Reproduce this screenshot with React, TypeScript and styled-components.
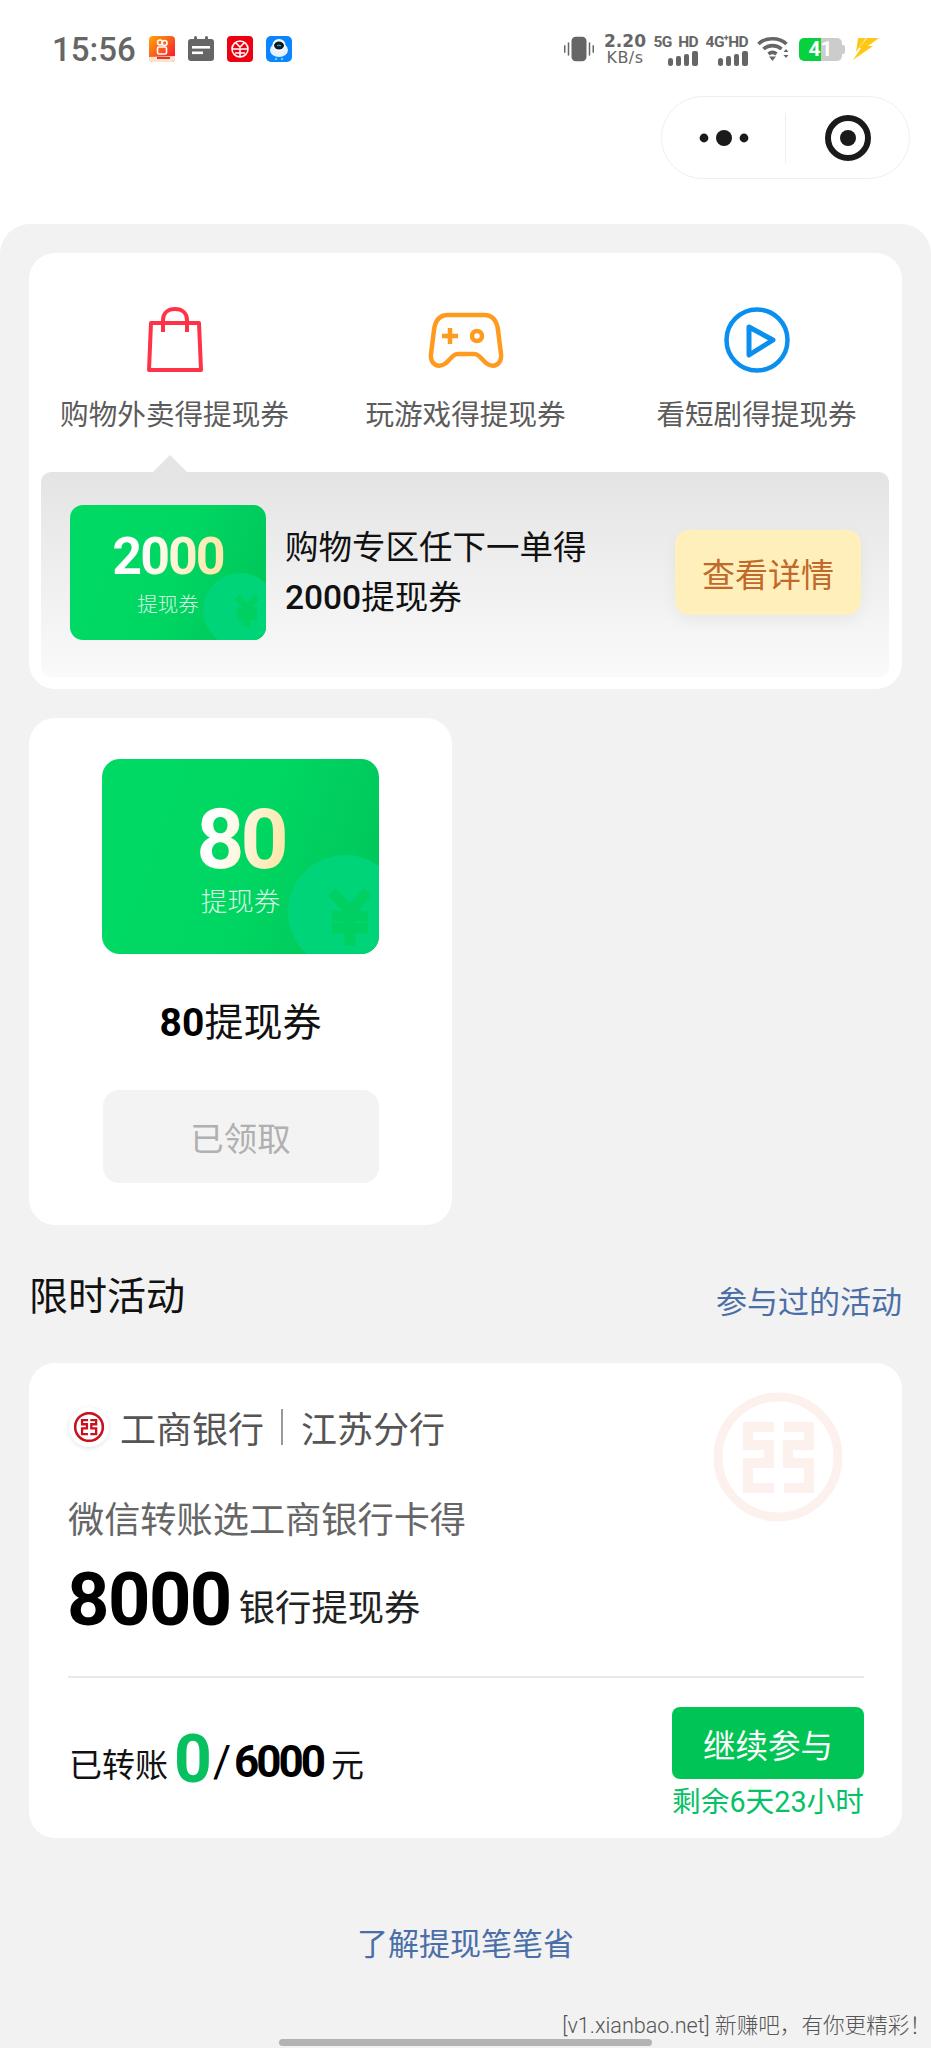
import styled, { createGlobalStyle } from 'styled-components'
import { JapaneseYen } from 'lucide-react'

const GlobalStyle = createGlobalStyle`
  html, body {
    margin: 0;
    padding: 0;
    background: #fff;
    font-family: Roboto, "Noto Sans CJK SC", sans-serif;
  }
`

const Page = styled.div`
  position: relative;
  display: flex;
  flex-direction: column;
  width: 931px;
  height: 2048px;
  overflow: hidden;
  background: #fff;
`

const StatusBar = styled.div`
  display: flex;
  align-items: center;
  height: 50px;
  margin-top: 24px;
  padding: 0 52px;
`

const Time = styled.div`
  font-size: 33px;
  font-weight: 500;
  color: #666;
  margin-right: 13px;
`

const AppIcons = styled.div`
  display: flex;
  gap: 13px;
`

const StatusRight = styled.div`
  display: flex;
  align-items: center;
  margin-left: auto;
`

const Speed = styled.div`
  display: flex;
  flex-direction: column;
  align-items: center;
  width: 40px;
  margin: 0 11px;
  font-family: "DejaVu Sans", sans-serif;
  color: #666;
  font-size: 17px;
  line-height: 17px;
  font-weight: 700;
  & > span:last-child {
    font-size: 16px;
    line-height: 16px;
    font-weight: 400;
    letter-spacing: 0.4px;
  }
`

const Network = styled.div<{ $gap: number }>`
  display: flex;
  flex-direction: column;
  align-items: flex-end;
  width: 42px;
  margin-right: ${(p) => p.$gap}px;
  font-size: 15.500px;
  line-height: 18px;
  font-weight: 700;
  letter-spacing: -0.6px;
  color: #666;
  white-space: nowrap;
  & sup {
    font-size: 9px;
    line-height: 0;
  }
`

const Battery = styled.div`
  position: relative;
  display: flex;
  align-items: center;
  justify-content: center;
  width: 43px;
  height: 23px;
  margin: 0 11px 0 9px;
  border-radius: 5px;
  background: linear-gradient(90deg, #07d13f 0 52%, #ccc 52% 100%);
  font-size: 21px;
  font-weight: 700;
  color: #fff;
  &::after {
    content: '';
    position: absolute;
    right: -3px;
    top: 7px;
    width: 3px;
    height: 9px;
    border-radius: 0 2px 2px 0;
    background: #ccc;
  }
`

const CapsuleRow = styled.div`
  display: flex;
  justify-content: flex-end;
  margin-top: 22px;
  padding-right: 21px;
`

const Capsule = styled.div`
  display: flex;
  align-items: center;
  box-sizing: border-box;
  width: 249px;
  height: 83px;
  border: 1.5px solid #efefef;
  border-radius: 42px;
`

const CapsuleSide = styled.div`
  flex: 1;
  display: flex;
  justify-content: center;
  align-items: center;
  height: 50px;
  & + & {
    border-left: 1.5px solid #eee;
  }
`

const Sheet = styled.div`
  flex: 1;
  margin-top: 45px;
  padding: 29px 29px 0;
  background: #f2f2f2;
  border-radius: 30px 30px 0 0;
`

const Card = styled.div`
  background: #fff;
  border-radius: 26px;
`

const TabsCard = styled(Card)`
  height: 436px;
  display: flex;
  flex-direction: column;
`

const Tabs = styled.div`
  display: grid;
  grid-template-columns: repeat(3, 1fr);
  height: 219px;
`

const Tab = styled.div`
  display: flex;
  flex-direction: column;
  align-items: center;
  padding-top: 54px;
`

const TabIcon = styled.div`
  display: flex;
  align-items: center;
  justify-content: center;
  height: 65px;
`

const TabLabel = styled.div`
  margin-top: 23px;
  font-size: 28.600px;
  line-height: 40px;
  color: #5c5c5c;
  white-space: nowrap;
`

const Panel = styled.div`
  position: relative;
  display: flex;
  align-items: center;
  height: 205px;
  margin: 0 13px 0 12px;
  padding: 0 28px 4px 29px;
  border-radius: 10px;
  box-sizing: border-box;
  background: linear-gradient(180deg, #e4e4e4, #fafafa);
  &::before {
    content: '';
    position: absolute;
    left: 111px;
    top: -17px;
    width: 36px;
    height: 18px;
    background: #e5e5e5;
    clip-path: polygon(50% 0, 100% 100%, 0 100%);
  }
`

const Coupon = styled.div<{ $big?: boolean }>`
  position: relative;
  flex: none;
  box-sizing: border-box;
  display: flex;
  flex-direction: column;
  align-items: center;
  overflow: hidden;
  width: ${(p) => (p.$big ? '277px' : '196px')};
  height: ${(p) => (p.$big ? '195px' : '135px')};
  margin: ${(p) => (p.$big ? '0 auto' : '0')};
  padding-top: ${(p) => (p.$big ? '36px' : '24px')};
  border-radius: ${(p) => (p.$big ? '18px' : '13px')};
  background: linear-gradient(110deg, #00da65 0%, #00d762 50%, #00c45a 100%);
`

const CouponCoin = styled.div<{ $big?: boolean }>`
  position: absolute;
  border-radius: 50%;
  background: #00d478;
  width: ${(p) => (p.$big ? '114px' : '74px')};
  height: ${(p) => (p.$big ? '114px' : '74px')};
  right: ${(p) => (p.$big ? '-23px' : '-11px')};
  bottom: ${(p) => (p.$big ? '-15px' : '-7px')};
`

const CouponYen = styled(JapaneseYen)<{ $big?: boolean }>`
  position: absolute;
  color: #00cf62;
  right: ${(p) => (p.$big ? '-7px' : '-1px')};
  bottom: ${(p) => (p.$big ? '-1px' : '8px')};
`

const CouponValue = styled.div<{ $big?: boolean }>`
  position: relative;
  font-weight: 700;
  font-size: ${(p) => (p.$big ? '84px' : '52px')};
  line-height: ${(p) => (p.$big ? '90px' : '56px')};
  letter-spacing: ${(p) => (p.$big ? '-4px' : '-2px')};
  background: linear-gradient(100deg, #fff 25%, #fbe8ac 90%);
  -webkit-background-clip: text;
  background-clip: text;
  color: transparent;
`

const CouponLabel = styled.div<{ $big?: boolean }>`
  position: relative;
  color: rgba(255, 255, 255, 0.85);
  font-size: ${(p) => (p.$big ? '26.500px' : '20.500px')};
  line-height: ${(p) => (p.$big ? '34px' : '26px')};
  margin-top: ${(p) => (p.$big ? '0' : '7px')};
  font-weight: 300;
`

const PanelText = styled.div`
  flex: 1;
  margin-left: 19px;
  font-size: 33.500px;
  line-height: 50px;
  color: #111;
`

const PanelNumber = styled.span`
  font-weight: 500;
`

const DetailButton = styled.div`
  flex: none;
  display: flex;
  align-items: center;
  justify-content: center;
  width: 186px;
  height: 85px;
  border-radius: 14px;
  background: #fff0bb;
  box-shadow: 0 6px 16px rgba(0, 0, 0, 0.05);
  color: #c0692a;
  font-size: 33px;
`

const RewardCard = styled(Card)`
  box-sizing: border-box;
  width: 423px;
  height: 507px;
  margin-top: 29px;
  padding-top: 41px;
`

const RewardTitle = styled.div`
  margin-top: 44px;
  text-align: center;
  font-size: 39px;
  line-height: 50px;
  color: #111;
  & b {
    color: #000;
  }
`

const ClaimedButton = styled.div`
  display: flex;
  align-items: center;
  justify-content: center;
  width: 276px;
  height: 93px;
  margin: 42px auto 0;
  border-radius: 16px;
  background: #f3f3f3;
  color: #b0b0b0;
  font-size: 33.500px;
`

const SectionHeader = styled.div`
  display: flex;
  justify-content: space-between;
  margin: 46px 0 34px;
`

const SectionTitle = styled.div`
  font-size: 39px;
  line-height: 52px;
  color: #111;
`

const SectionLink = styled.div`
  margin-top: 6px;
  font-size: 31px;
  line-height: 52px;
  color: #4a6ea8;
`

const ActivityCard = styled(Card)`
  position: relative;
  box-sizing: border-box;
  height: 475px;
  padding: 39px 38px 0 39px;
`

const Watermark = styled.div`
  position: absolute;
  right: 59px;
  top: 29px;
`

const BankRow = styled.div`
  position: relative;
  display: flex;
  align-items: center;
  height: 50px;
  font-size: 36px;
  color: #555;
`

const BankLogo = styled.div`
  display: flex;
  align-items: center;
  justify-content: center;
  width: 40px;
  height: 40px;
  margin: 0 11px 0 1px;
  border-radius: 50%;
  background: #fff;
  box-shadow: 0 1px 4px rgba(0, 0, 0, 0.12);
`

const BankDivider = styled.div`
  width: 2px;
  height: 36px;
  margin: 0 18px 0 17px;
  background: #999;
`

const Desc = styled.div`
  position: relative;
  margin-top: 44px;
  font-size: 36.200px;
  line-height: 50px;
  color: #666;
`

const AmountRow = styled.div`
  position: relative;
  display: flex;
  align-items: baseline;
  gap: 8px;
  margin: 14px 0 0 -1px;
  height: 80px;
`

const AmountValue = styled.span`
  font-size: 74px;
  line-height: 80px;
  font-weight: 700;
  letter-spacing: -1.500px;
  color: #000;
`

const AmountUnit = styled.span`
  font-size: 36.300px;
  color: #222;
  position: relative;
  top: -4px;
`

const Rule = styled.div`
  height: 2px;
  margin-top: 36px;
  background: #e9e9e9;
`

const Footer = styled.div`
  display: flex;
  justify-content: space-between;
  margin-top: 29px;
`

const Progress = styled.div`
  display: flex;
  align-items: baseline;
  height: 80px;
  margin: 8px 0 0 1px;
  font-size: 33px;
  line-height: 80px;
  color: #111;
`

const ProgressNow = styled.span`
  position: relative;
  top: 5px;
  margin: 0 3px 0 6px;
  font-size: 66px;
  font-weight: 700;
  letter-spacing: -2px;
  color: #07c160;
`

const ProgressTotal = styled.span`
  margin-right: 8px;
  font-size: 44px;
  font-weight: 700;
  letter-spacing: -3px;
  color: #000;
`

const Slash = styled.span`
  margin-right: 3px;
  font-size: 44px;
  font-weight: 400;
  color: #000;
`

const FooterAction = styled.div`
  display: flex;
  flex-direction: column;
  align-items: center;
  width: 192px;
`

const ContinueButton = styled.div`
  display: flex;
  align-items: center;
  justify-content: center;
  width: 100%;
  height: 72px;
  border-radius: 8px;
  background: #00c555;
  color: #fff;
  font-size: 32.500px;
`

const Remaining = styled.div`
  margin-top: 3px;
  font-size: 28.700px;
  line-height: 40px;
  color: #06c167;
  white-space: nowrap;
`

const LearnMore = styled.div`
  margin-top: 82px;
  text-align: center;
  font-size: 31px;
  line-height: 50px;
  color: #4a6ea8;
`

const SiteNote = styled.div`
  position: absolute;
  right: 0;
  bottom: 7px;
  font-size: 21.600px;
  line-height: 30px;
  color: #555;
  font-weight: 300;
  white-space: nowrap;
`

const HomeBar = styled.div`
  position: absolute;
  left: 279px;
  bottom: 2px;
  width: 373px;
  height: 7px;
  border-radius: 4px;
  background: #b3b3b3;
`

function Signal() {
  return (
    <svg width="30" height="15" viewBox="0 0 30 15" fill="#666">
      <rect x="0" y="7" width="5" height="8" rx="2.500" />
      <rect x="8" y="5" width="5" height="10" rx="2" />
      <rect x="16" y="3" width="5" height="12" rx="2" />
      <rect x="24" y="0" width="6" height="15" rx="2" />
    </svg>
  )
}

function IcbcMark({ size, color, ring }: { size: number; color: string; ring: number }) {
  return (
    <svg width={size} height={size} viewBox="0 0 130 130" fill="none" stroke={color} style={{ display: 'block' }}>
      <circle cx="65" cy="65" r="60" strokeWidth={ring} />
      <path d="M61 35 H35 V53 H56 V71 H35 V96 H61 M71 35 H96 V53 H75 V71 H96 V96 H71" strokeWidth="10" />
    </svg>
  )
}

function App() {
  return (
    <Page>
      <GlobalStyle />
      <StatusBar>
        <Time>15:56</Time>
        <AppIcons>
          <svg width="26" height="26" viewBox="0 0 26 26">
            <defs>
              <linearGradient id="ks" x1="0" y1="0" x2="1" y2="1">
                <stop offset="0" stopColor="#ffa800" />
                <stop offset="1" stopColor="#f50a3c" />
              </linearGradient>
            </defs>
            <rect width="26" height="26" rx="4" fill="url(#ks)" />
            <g fill="none" stroke="#fff" strokeWidth="1.600">
              <circle cx="11" cy="6.500" r="2.500" />
              <circle cx="15.500" cy="7" r="2.500" />
              <rect x="8.500" y="11" width="9" height="7" rx="1.500" />
            </g>
            <path d="M0 21 L26 20 V23 Q26 26 22 26 H4 Q0 26 0 23 Z" fill="#ffe3cc" />
            <path d="M8 22 H21" stroke="#e5352b" strokeWidth="2" />
          </svg>
          <svg width="26" height="26" viewBox="0 0 26 26">
            <rect x="0" y="3" width="26" height="22" rx="3" fill="#666" />
            <rect x="6" y="0" width="3" height="6" rx="1.500" fill="#666" />
            <rect x="17" y="0" width="3" height="6" rx="1.500" fill="#666" />
            <rect x="4" y="10" width="18" height="2.600" fill="#fff" />
            <rect x="4" y="15.500" width="11" height="2.600" fill="#fff" />
          </svg>
          <svg width="26" height="26" viewBox="0 0 26 26">
            <rect width="26" height="26" rx="4" fill="#ee0011" />
            <g fill="none" stroke="#fff" strokeWidth="1.600">
              <circle cx="13" cy="13" r="8" />
              <path d="M5 13 H21 M13 13 V21 M9 7 L13 11 L17 7 M8 17 H18" />
            </g>
          </svg>
          <svg width="26" height="26" viewBox="0 0 26 26">
            <rect width="26" height="26" rx="5" fill="#0a84ff" />
            <ellipse cx="13" cy="14" rx="9" ry="7" fill="#e8f2fb" />
            <ellipse cx="13" cy="9" rx="6.500" ry="6" fill="#fff" />
            <ellipse cx="13" cy="9.500" rx="5" ry="4" fill="#0c1a22" />
            <path d="M11 10 Q13 8 15 10" fill="none" stroke="#35d7c8" strokeWidth="1" />
            <circle cx="10" cy="23" r="1.200" fill="#53d7f0" />
            <circle cx="16" cy="23" r="1.200" fill="#53d7f0" />
          </svg>
        </AppIcons>
        <StatusRight>
          <svg width="30" height="26" viewBox="0 0 32 26" fill="#666">
            <rect x="8" y="0" width="16" height="26" rx="4.500" />
            <rect x="4" y="6" width="1.600" height="14" />
            <rect x="0" y="9" width="1.600" height="8" />
            <rect x="26.400" y="6" width="1.600" height="14" />
            <rect x="30.400" y="9" width="1.600" height="8" />
          </svg>
          <Speed>
            <span>2.20</span>
            <span>KB/s</span>
          </Speed>
          <Network $gap={8}>
            <span>5G&nbsp;&nbsp;HD</span>
            <Signal />
          </Network>
          <Network $gap={9}>
            <span>
              4G<sup>+</sup>HD
            </span>
            <Signal />
          </Network>
          <svg width="33" height="26" viewBox="0 0 32 26" fill="none" stroke="#666" strokeWidth="3.600">
            <path d="M1 8 C8 1 22 1 29 8" />
            <path d="M6 13 C11 8.500 19 8.500 24 13" />
            <path d="M11 18 C13.500 16 16.500 16 19 18" />
            <path d="M11.500 20.500 L15 25 L18.500 20.500 Z" fill="#666" stroke="none" />
            <path d="M26 16 L28.500 13 L31 16 Z M26 19 L28.500 22 L31 19 Z" fill="#666" stroke="none" />
          </svg>
          <Battery>41</Battery>
          <svg width="26" height="22" viewBox="0 0 26 22" fill="#ffc815">
            <path d="M5 0 H13 L8 7 L3 14 Z" />
            <path d="M14 0 H26 L15 8 H20 L0 22 L8 10 H6 Z" />
          </svg>
        </StatusRight>
      </StatusBar>

      <CapsuleRow>
        <Capsule>
          <CapsuleSide>
            <svg width="56" height="18" viewBox="0 0 56 18" fill="#1a1a1a">
              <circle cx="8" cy="9" r="4.400" />
              <circle cx="28" cy="9" r="8" />
              <circle cx="48" cy="9" r="4.400" />
            </svg>
          </CapsuleSide>
          <CapsuleSide>
            <svg width="46" height="46" viewBox="0 0 46 46">
              <circle cx="23" cy="23" r="20" fill="none" stroke="#1a1a1a" strokeWidth="6" />
              <circle cx="23" cy="23" r="8" fill="#1a1a1a" />
            </svg>
          </CapsuleSide>
        </Capsule>
      </CapsuleRow>

      <Sheet>
        <TabsCard>
          <Tabs>
            <Tab>
              <TabIcon>
                <svg width="56" height="66" viewBox="0 0 56 66" fill="none" stroke="#ff3347" strokeWidth="4" strokeLinejoin="round">
                  <path d="M4 16 H52 L54 63 H2 Z" />
                  <path d="M16 25 V13 C16 6 21 2 28 2 C35 2 40 6 40 13 V25" />
                </svg>
              </TabIcon>
              <TabLabel>购物外卖得提现券</TabLabel>
            </Tab>
            <Tab>
              <TabIcon>
                <svg width="80" height="60" viewBox="8 10 80 60" fill="none" stroke="#ff9a1f" strokeWidth="4.500">
                  <path d="M30 15 H66 C76 15 79 22 80 30 L83 54 C84 64 76 69 68 63 L61 56 C59 54 58 54 56 54 H40 C38 54 37 54 35 56 L28 63 C20 69 12 64 13 54 L16 30 C17 22 20 15 30 15 Z" />
                  <path d="M24 36 H40 M32 28 V44" />
                  <circle cx="59" cy="36" r="5" />
                </svg>
              </TabIcon>
              <TabLabel>玩游戏得提现券</TabLabel>
            </Tab>
            <Tab>
              <TabIcon>
                <svg width="66" height="66" viewBox="0 0 66 66" fill="none" stroke="#0a8fef" strokeWidth="4.500">
                  <circle cx="33" cy="33" r="30.500" />
                  <path d="M25 20 L49 33 L25 48 Z" strokeWidth="5" strokeLinejoin="round" />
                </svg>
              </TabIcon>
              <TabLabel>看短剧得提现券</TabLabel>
            </Tab>
          </Tabs>
          <Panel>
            <Coupon>
              <CouponCoin />
              <CouponYen size={40} strokeWidth={4} strokeLinecap="butt" />
              <CouponValue>2000</CouponValue>
              <CouponLabel>提现券</CouponLabel>
            </Coupon>
            <PanelText>
              购物专区任下一单得
              <br />
              <PanelNumber>2000</PanelNumber>提现券
            </PanelText>
            <DetailButton>查看详情</DetailButton>
          </Panel>
        </TabsCard>

        <RewardCard>
          <Coupon $big>
            <CouponCoin $big />
            <CouponYen $big size={72} strokeWidth={3.500} strokeLinecap="butt" />
            <CouponValue $big>80</CouponValue>
            <CouponLabel $big>提现券</CouponLabel>
          </Coupon>
          <RewardTitle>
            <b>80</b>提现券
          </RewardTitle>
          <ClaimedButton>已领取</ClaimedButton>
        </RewardCard>

        <SectionHeader>
          <SectionTitle>限时活动</SectionTitle>
          <SectionLink>参与过的活动</SectionLink>
        </SectionHeader>

        <ActivityCard>
          <Watermark>
            <IcbcMark size={130} color="#fdf1ee" ring={9} />
          </Watermark>
          <BankRow>
            <BankLogo>
              <IcbcMark size={30} color="#c8101e" ring={11} />
            </BankLogo>
            工商银行
            <BankDivider />
            江苏分行
          </BankRow>
          <Desc>微信转账选工商银行卡得</Desc>
          <AmountRow>
            <AmountValue>8000</AmountValue>
            <AmountUnit>银行提现券</AmountUnit>
          </AmountRow>
          <Rule />
          <Footer>
            <Progress>
              已转账
              <ProgressNow>0</ProgressNow>
              <Slash>/</Slash>
              <ProgressTotal>6000</ProgressTotal>元
            </Progress>
            <FooterAction>
              <ContinueButton>继续参与</ContinueButton>
              <Remaining>剩余6天23小时</Remaining>
            </FooterAction>
          </Footer>
        </ActivityCard>

        <LearnMore>了解提现笔笔省</LearnMore>
      </Sheet>

      <SiteNote>[v1.xianbao.net] 新赚吧，有你更精彩！</SiteNote>
      <HomeBar />
    </Page>
  )
}

export default App
